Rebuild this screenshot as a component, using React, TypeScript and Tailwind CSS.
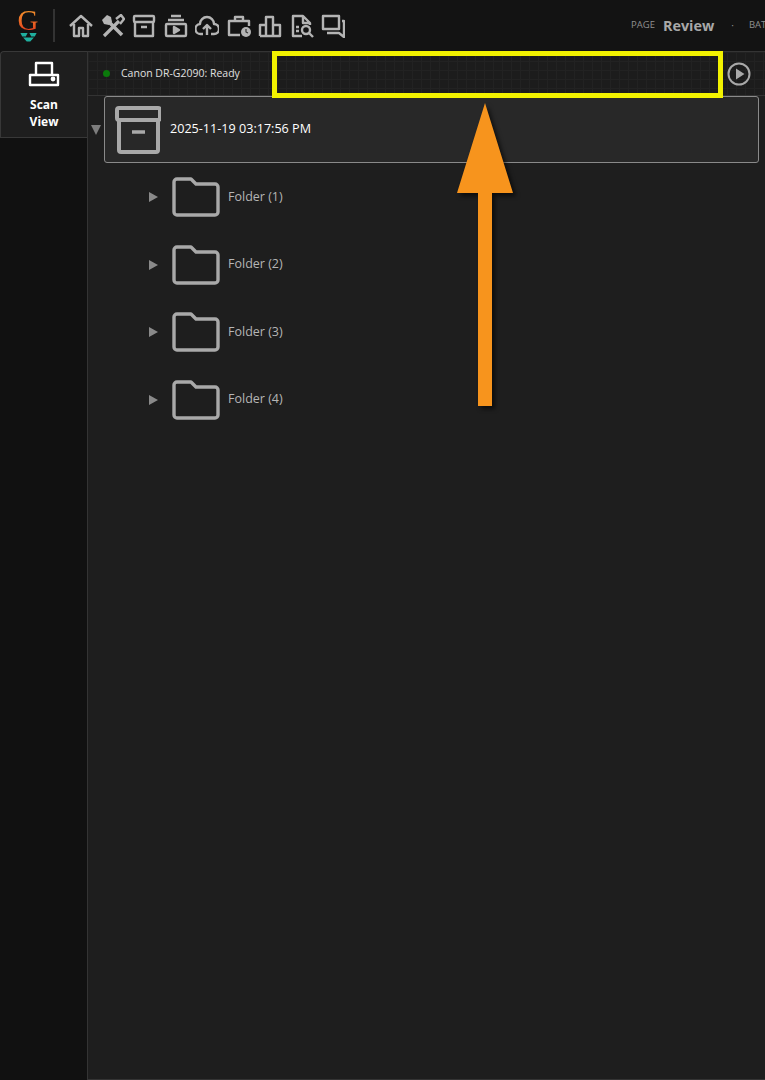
import React from 'react';

const iconClass = 'fill-none stroke-[#b4b4b4] stroke-[2.4]';

function NavIcon({ children, className = '' }: { children: React.ReactNode; className?: string }) {
    return (
        <svg viewBox="0 0 24 24" className={`w-[24px] h-[24px] shrink-0 ${iconClass} ${className}`} strokeLinejoin="round">
            {children}
        </svg>
    );
}

function ArchiveBox({ size }: { size: number }) {
    return (
        <svg viewBox="0 0 46 48" style={{ width: size, height: size * 48 / 46 }} className="fill-none stroke-[#a9a9a9] shrink-0" strokeWidth="4" strokeLinejoin="round">
            <rect x="2" y="2" width="43" height="12" rx="2" />
            <path d="M4 14 V44 a2 2 0 0 0 2 2 H41 a2 2 0 0 0 2 -2 V14" />
            <path d="M17 26 H30" strokeWidth="3.5" />
        </svg>
    );
}

function FolderRow({ label }: { label: string }) {
    return (
        <div className="flex items-center h-[40px] mb-[27.5px]">
            <span className="w-0 h-0 border-y-[5px] border-y-transparent border-l-[9px] border-l-[#8a8a8a] ml-[148px]" />
            <svg viewBox="0 0 48 40" className="w-[48px] h-[40px] ml-[14px] fill-none stroke-[#a9a9a9] shrink-0" strokeWidth="3.4" strokeLinejoin="round">
                <path d="M2 5 a3 3 0 0 1 3 -3 H19 L24 7 H43 a3 3 0 0 1 3 3 V35 a3 3 0 0 1 -3 3 H5 a3 3 0 0 1 -3 -3 Z" />
            </svg>
            <span className="ml-[8px] text-[12.5px] text-[#b5b5b5]">{label}</span>
        </div>
    );
}

export default function App() {
    return (
        <div className="relative w-[765px] h-[1080px] overflow-hidden bg-[#111111] font-['Open_Sans',sans-serif]">
            {/* Top bar */}
            <header className="flex items-center h-[51px] bg-[#131313] pl-[18px]">
                <div className="flex flex-col items-center w-[20px] -mt-[1px]">
                    <span className="font-['Liberation_Serif',serif] text-[29px] leading-[25px] text-transparent bg-clip-text bg-gradient-to-b from-[#f59a2e] to-[#e0301c]">G</span>
                    <svg viewBox="0 0 20 10" className="w-[19px] h-[9px] fill-[#1fb09f]">
                        <path d="M1 0 H9 L7 4 H3 Z M11 0 H19 L17 4 H13 Z M4 5 H16 L12 9.5 H8 Z" />
                    </svg>
                </div>
                <div className="w-[2px] h-[33px] bg-[#333333] ml-[15px]" />
                <div className="flex items-center gap-[7.5px] ml-[14px]">
                    <NavIcon>
                        <path d="M1 12 L12 2 L23 12 M5 10 V22 H10 V14 H14 V22 H19 V10" />
                    </NavIcon>
                    <NavIcon>
                        <path d="M1 6 L6 1 L10 3 L11 8 L8 11 L3 10 Z" className="fill-[#b4b4b4] stroke-none" />
                        <path d="M8 8 L21 21" strokeWidth="3.6" />
                        <path d="M3 22 L18 7" strokeWidth="3.2" />
                        <path d="M15 5 L20 1 L23 5 L19 10" strokeWidth="2.4" />
                    </NavIcon>
                    <NavIcon>
                        <rect x="2" y="2" width="20" height="6" rx="1" />
                        <path d="M3 8 V22 H21 V8 M9 13 H15" />
                    </NavIcon>
                    <NavIcon>
                        <path d="M7 2 H17 M4 6 H20" strokeWidth="2.5" />
                        <rect x="2" y="10" width="20" height="12" rx="1" />
                        <path d="M10 13 L15 16 L10 19 Z" className="fill-[#b4b4b4]" />
                    </NavIcon>
                    <NavIcon>
                        <path d="M8 20 H6 a5 5 0 0 1 -1 -10 a7 7 0 0 1 14 0 a5 5 0 0 1 0 10 H16 M12 21 V11 M8 15 L12 11 L16 15" />
                    </NavIcon>
                    <NavIcon>
                        <path d="M13 21 H2 V7 H22 V12 M8 7 V3 H16 V7" />
                        <circle cx="19" cy="18" r="5" className="fill-[#b4b4b4] stroke-none" />
                        <path d="M19 15 V18 L21 19" className="stroke-[#333333]" strokeWidth="1.2" />
                    </NavIcon>
                    <NavIcon>
                        <path d="M2 22 V11 H8 V22 M8 22 V3 H15 V22 M15 22 V11 H22 V22 H2" />
                    </NavIcon>
                    <NavIcon>
                        <path d="M12 22 H3 V2 H13 L20 9 V11 M13 2 V9 H20 M6 13 H9 M6 17 H9" />
                        <circle cx="16" cy="16" r="4" />
                        <path d="M19 19 L23 23" />
                    </NavIcon>
                    <NavIcon>
                        <path d="M2 2 H18 V15 H2 Z M21 7 H23 V23 L18 19 H6" />
                    </NavIcon>
                </div>
                <div className="ml-auto flex items-center whitespace-nowrap w-[134px] shrink-0 overflow-hidden">
                    <span className="text-[9.5px] text-[#8f8f8f]">PAGE</span>
                    <span className="ml-[8px] text-[14.4px] font-bold text-[#a8a8a8]">Review</span>
                    <span className="ml-[17px] text-[10px] text-[#8f8f8f]">·</span>
                    <span className="ml-[15px] text-[9.5px] text-[#8f8f8f]">BATCH</span>
                </div>
            </header>

            <div className="flex h-[1029px]">
                {/* Side tabs */}
                <aside className="w-[87px] shrink-0">
                    <div className="h-[87px] w-[87px] bg-[#1e1e1e] border border-r-0 border-[#383838] rounded-tl-[4px] flex flex-col items-center pt-[9px]">
                        <svg viewBox="0 0 32 26" className="w-[32px] h-[26px] fill-none stroke-white" strokeWidth="2.4" strokeLinejoin="round">
                            <path d="M8 13 V2 H24 V13" />
                            <path d="M2 14 H30 V24 H2 Z" />
                            <circle cx="25" cy="18" r="1.2" className="fill-white" />
                        </svg>
                        <span className="mt-[9px] text-[12px] leading-[17px] font-bold text-white text-center">Scan<br />View</span>
                    </div>
                </aside>

                {/* Main panel */}
                <main className="flex-1 min-w-0 bg-[#1e1e1e] border-l border-t border-b border-[#343434]">
                    <div className="flex items-center h-[44px] border-b border-[#333333] bg-[#1c1c1c] bg-[linear-gradient(#222222_1px,transparent_1px),linear-gradient(90deg,#222222_1px,transparent_1px)] bg-[size:9px_9px] pl-[15px] pr-[14px]">
                        <span className="w-[7px] h-[7px] rounded-full bg-[#0b7a0b]" />
                        <span className="ml-[11px] text-[10.5px] text-[#e0e0e0]">Canon DR-G2090: Ready</span>
                        <svg viewBox="0 0 24 24" className="w-[24px] h-[24px] ml-auto fill-none stroke-[#a9a9a9]" strokeWidth="2">
                            <circle cx="12" cy="12" r="10.5" />
                            <path d="M9 6.5 L17.5 12 L9 17.5 Z" className="fill-[#a9a9a9] stroke-none" />
                        </svg>
                    </div>

                    {/* Batch row */}
                    <div className="flex items-center pr-[6px]">
                        <span className="w-0 h-0 border-x-[5px] border-x-transparent border-t-[10px] border-t-[#7d7d7d] ml-[3px] mr-[3px]" />
                        <div className="flex-1 h-[67px] flex items-center bg-[#282828] border border-[#8a8a8a] rounded-[3px] pl-[10px]">
                            <ArchiveBox size={46} />
                            <span className="ml-[9px] text-[12.6px] text-white">2025-11-19 03:17:56 PM</span>
                        </div>
                    </div>

                    <div className="mt-[14px] -ml-[87px]">
                        <FolderRow label="Folder (1)" />
                        <FolderRow label="Folder (2)" />
                        <FolderRow label="Folder (3)" />
                        <FolderRow label="Folder (4)" />
                    </div>
                </main>
            </div>

            {/* Annotation drawn over the screenshot */}
            <div className="absolute left-[272px] top-[51px] w-[451px] h-[47px] border-[5px] border-[#f2f200]" />
            <svg viewBox="0 0 64 310" className="absolute left-[455px] top-[102px] w-[64px] h-[310px] drop-shadow-[3px_3px_2px_rgba(0,0,0,0.6)]">
                <path d="M30 1 L58 91 H37 V304 H23 V91 H2 Z" className="fill-[#f7941d]" />
            </svg>
        </div>
    );
}
